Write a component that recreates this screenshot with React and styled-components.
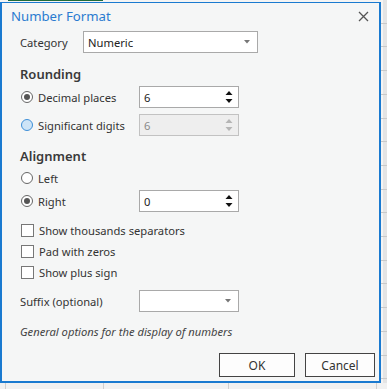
import React from "react";
import styled, { createGlobalStyle } from "styled-components";

const GlobalStyle = createGlobalStyle`
  html, body {
    margin: 0;
    padding: 0;
    background: #f3f3f3;
  }
  body {
    font-family: "Noto Sans", "Open Sans", sans-serif;
  }
`;

function Radio({ checked, hover }) {
  return (
    <RadioCircle $hover={hover}>
      {checked && <RadioDot />}
    </RadioCircle>
  );
}

function SpinBox({ value, disabled }) {
  return (
    <Box $disabled={disabled}>
      <BoxText $disabled={disabled}>{value}</BoxText>
      <Arrows>
        <svg width="8" height="14" viewBox="0 0 8 14">
          <path d="M0.5 5 L4 1 L7.5 5 Z" fill={disabled ? "#b5b5b5" : "#111"} />
          <path d="M0.5 9 L4 13 L7.5 9 Z" fill={disabled ? "#b5b5b5" : "#111"} />
        </svg>
      </Arrows>
    </Box>
  );
}

function Combo({ value, width }) {
  return (
    <Box $width={width}>
      <BoxText>{value}</BoxText>
      <Caret>
        <svg width="6" height="4" viewBox="0 0 6 4">
          <path d="M0 0 L6 0 L3 3.5 Z" fill="#777" />
        </svg>
      </Caret>
    </Box>
  );
}

function App() {
  return (
    <Page>
      <GlobalStyle />
      <Dialog>
        <TitleBar>
          <Title>Number Format</Title>
          <Close>
            <svg width="11" height="11" viewBox="0 0 11 11">
              <path d="M1 1 L10 10 M10 1 L1 10" stroke="#555" strokeWidth="1.3" />
            </svg>
          </Close>
        </TitleBar>
        <Body>
          <Row $mt={3} $h={22}>
            <Label $w={63}>Category</Label>
            <Combo value="Numeric" width={175} />
          </Row>

          <Heading $mt={11}>Rounding</Heading>
          <Row $mt={2} $h={22}>
            <OptionLabel>
              <Radio checked />
              <span>Decimal places</span>
            </OptionLabel>
            <SpinBox value="6" />
          </Row>
          <Row $mt={6} $h={22}>
            <OptionLabel>
              <Radio hover />
              <span>Significant digits</span>
            </OptionLabel>
            <SpinBox value="6" disabled />
          </Row>

          <Heading $mt={10}>Alignment</Heading>
          <Row $mt={1} $h={22}>
            <OptionLabel>
              <Radio />
              <span>Left</span>
            </OptionLabel>
          </Row>
          <Row $mt={1} $h={22}>
            <OptionLabel>
              <Radio checked />
              <span>Right</span>
            </OptionLabel>
            <SpinBox value="0" />
          </Row>

          <Row $mt={8} $h={21}>
            <CheckLabel>
              <CheckBox />
              <span>Show thousands separators</span>
            </CheckLabel>
          </Row>
          <Row $h={21}>
            <CheckLabel>
              <CheckBox />
              <span>Pad with zeros</span>
            </CheckLabel>
          </Row>
          <Row $h={21}>
            <CheckLabel>
              <CheckBox />
              <span>Show plus sign</span>
            </CheckLabel>
          </Row>

          <Row $mt={7} $h={22}>
            <Label $w={119}>Suffix (optional)</Label>
            <Combo value="" width={100} />
          </Row>

          <Hint>General options for the display of numbers</Hint>
        </Body>
        <Footer>
          <Button $w={76}>OK</Button>
          <Button $w={70}>Cancel</Button>
        </Footer>
      </Dialog>
    </Page>
  );
}

export default App;

const Page = styled.div`
  width: 387px;
  height: 389px;
  overflow: hidden;
  display: flex;
  align-items: flex-start;
  background:
    linear-gradient(#1f6b3a, #1f6b3a) 8px 0 / 95px 1px no-repeat,
    repeating-linear-gradient(
        to bottom,
        transparent 0,
        transparent 22.7px,
        #c9c9c9 22.7px,
        #c9c9c9 23.7px
      )
      381px 0 / 6px 383px no-repeat,
    linear-gradient(#e4e4e4, #e4e4e4) 383px 0 / 4px 383px no-repeat,
    repeating-linear-gradient(
        to right,
        #f1f1f1 0,
        #f1f1f1 5px,
        #cfcfcf 5px,
        #cfcfcf 6px,
        #f1f1f1 6px,
        #f1f1f1 103px,
        #cfcfcf 103px,
        #cfcfcf 104px,
        #f1f1f1 104px,
        #f1f1f1 228px,
        #cfcfcf 228px,
        #cfcfcf 229px,
        #f1f1f1 229px,
        #f1f1f1 376px,
        #cfcfcf 376px,
        #cfcfcf 377px,
        #f1f1f1 377px,
        #f1f1f1 387px
      )
      0 383px / 387px 6px no-repeat,
    #f4f4f4;
`;

const Dialog = styled.div`
  box-sizing: border-box;
  margin-top: 2px;
  width: 381px;
  height: 381px;
  background: #f5f6f6;
  border: solid #1a7ad0;
  border-width: 1px 2px 2px 2px;
  display: flex;
  flex-direction: column;
  color: #333;
  font-size: 11.2px;
`;

const TitleBar = styled.div`
  height: 25px;
  display: flex;
  align-items: center;
  justify-content: space-between;
  padding: 0 10px 0 9px;
`;

const Title = styled.div`
  color: #2a7bd0;
  font-size: 13.2px;
`;

const Close = styled.div`
  display: flex;
  align-items: center;
  padding-top: 1px;
`;

const Body = styled.div`
  display: flex;
  flex-direction: column;
  padding-left: 18px;
`;

const Row = styled.div`
  display: flex;
  align-items: center;
  height: ${(p) => p.$h}px;
  margin-top: ${(p) => p.$mt || 0}px;
`;

const Label = styled.div`
  width: ${(p) => p.$w}px;
`;

const Heading = styled.div`
  height: 20px;
  line-height: 20px;
  margin-top: ${(p) => p.$mt}px;
  font-size: 13px;
  font-weight: 600;
  color: #3a3a3a;
`;

const OptionLabel = styled.div`
  width: 119px;
  display: flex;
  align-items: center;
  gap: 5px;
  padding-left: 1px;
  box-sizing: border-box;
`;

const RadioCircle = styled.div`
  box-sizing: border-box;
  width: 12px;
  height: 12px;
  border-radius: 50%;
  border: 1px solid ${(p) => (p.$hover ? "#3d8fd8" : "#666")};
  background: ${(p) => (p.$hover ? "#cde4f7" : "#fff")};
  display: flex;
  align-items: center;
  justify-content: center;
`;

const RadioDot = styled.div`
  width: 6px;
  height: 6px;
  border-radius: 50%;
  background: #555;
`;

const CheckLabel = styled.div`
  display: flex;
  align-items: center;
  gap: 5px;
  padding-left: 1px;
`;

const CheckBox = styled.div`
  box-sizing: border-box;
  width: 13px;
  height: 13px;
  border: 1px solid #777;
  background: #fff;
`;

const Box = styled.div`
  box-sizing: border-box;
  width: ${(p) => p.$width || 100}px;
  height: 22px;
  border: 1px solid ${(p) => (p.$disabled ? "#c2c2c2" : "#a9a9a9")};
  background: ${(p) => (p.$disabled ? "#eeeeee" : "#fff")};
  display: flex;
  align-items: center;
  justify-content: space-between;
  padding: 0 5px 0 4px;
`;

const BoxText = styled.span`
  color: ${(p) => (p.$disabled ? "#8a8a8a" : "#222")};
`;

const Arrows = styled.div`
  display: flex;
  align-items: center;
`;

const Caret = styled.div`
  display: flex;
  align-items: center;
  padding-right: 2px;
`;

const Hint = styled.div`
  height: 20px;
  line-height: 20px;
  margin-top: 10px;
  font-style: italic;
  color: #444;
`;

const Footer = styled.div`
  display: flex;
  justify-content: flex-end;
  gap: 10px;
  margin-top: 11px;
  padding-right: 4px;
`;

const Button = styled.button`
  box-sizing: border-box;
  width: ${(p) => p.$w}px;
  height: 24px;
  border: 1px solid #444;
  background: #fdfdfd;
  color: #333;
  font-family: inherit;
  font-size: 12px;
  padding: 0;
`;
